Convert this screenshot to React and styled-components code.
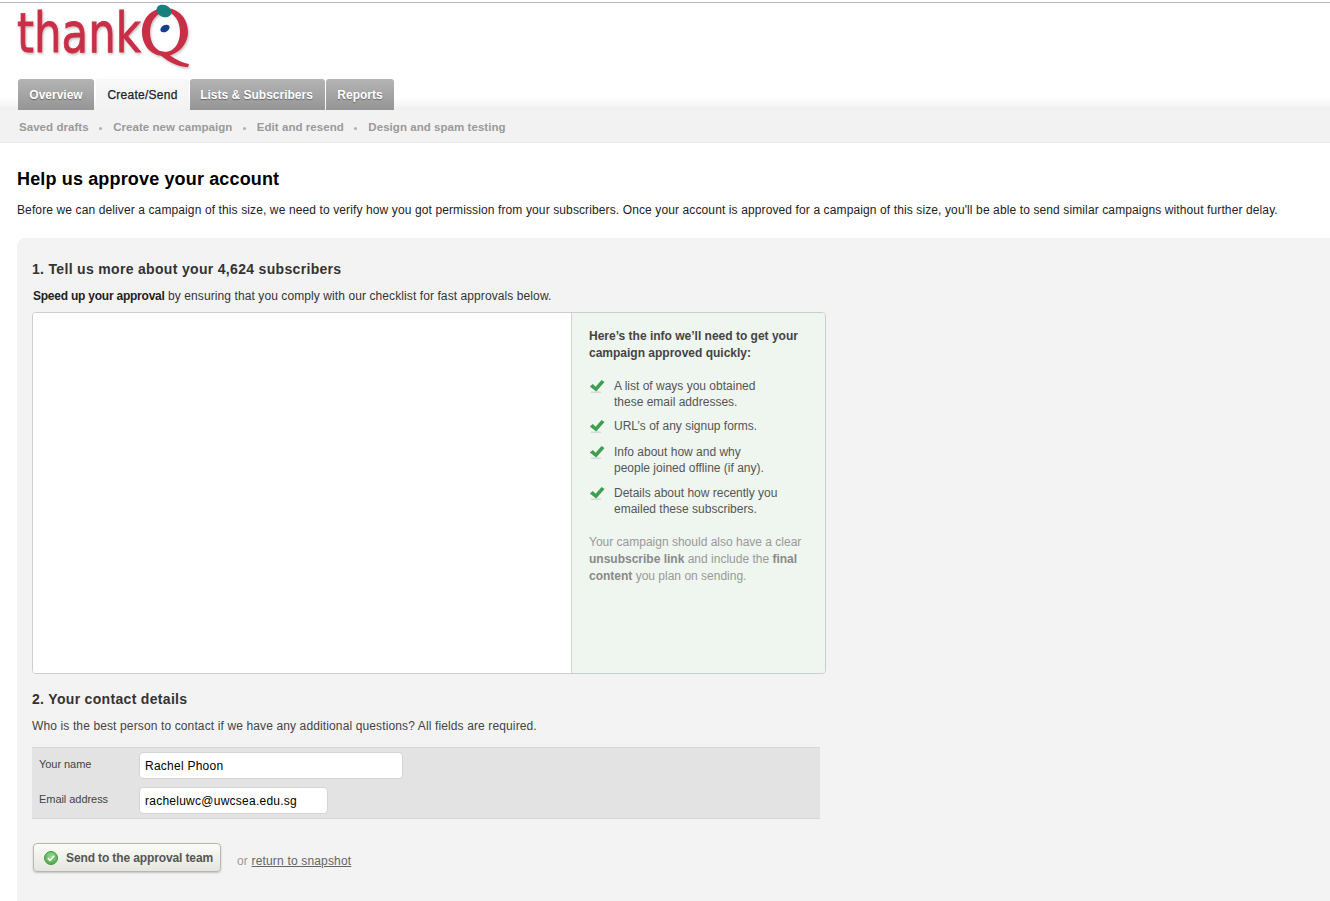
import React from "react"
import styled, { createGlobalStyle } from "styled-components"

const tabs = [
  { label: "Overview", width: 76 },
  { label: "Create/Send", width: 93, active: true },
  { label: "Lists & Subscribers", width: 135, nudge: 2 },
  { label: "Reports", width: 68 },
]

const subLinks = [
  "Saved drafts",
  "Create new campaign",
  "Edit and resend",
  "Design and spam testing",
]

const checklist = [
  ["A list of ways you obtained", "these email addresses."],
  ["URL’s of any signup forms."],
  ["Info about how and why", "people joined offline (if any)."],
  ["Details about how recently you", "emailed these subscribers."],
]

function Logo() {
  return (
    <LogoSvg viewBox="0 0 176 68" width="176" height="68">
      <defs>
        <filter id="logoShadow" x="-5%" y="-5%" width="110%" height="115%">
          <feDropShadow dx="1" dy="1.5" stdDeviation="1.2" floodColor="#000" floodOpacity="0.25" />
        </filter>
      </defs>
      <g filter="url(#logoShadow)" fill="#c92f47">
        <text x="0" y="48" fontFamily="'DejaVu Sans', sans-serif" fontSize="56" stroke="#c92f47" strokeWidth="0.9" textLength="124" lengthAdjust="spacingAndGlyphs">
          thank
        </text>
        <path
          fillRule="evenodd"
          d="M148 4c-14 0-23 11-23 24s9 24 22 24 24-11 24-24S162 4 148 4zm1 4c8 0 14 9 14 20s-6 20-15 20-15-9-15-20 7-20 16-20z"
        />
        <path d="M139 47l10 1c7 6 14 10 23 12l-1 3c-11 0-22-6-32-16z" />
      </g>
      <ellipse cx="147" cy="7" rx="7.8" ry="6" fill="#17807e" transform="rotate(25 147 7)" />
      <ellipse cx="148" cy="24.5" rx="5" ry="3.4" fill="#173f8c" transform="rotate(-30 148 24.5)" />
    </LogoSvg>
  )
}

function Check() {
  return (
    <CheckSvg viewBox="0 0 16 15" width="16" height="15">
      <path d="M2 13.2h10" stroke="#d3dcd4" strokeWidth="1.4" />
      <path d="M.8 7.6 3.8 5l2.8 2.7L12.6 1l2.9 2.1L7.2 12.6z" fill="#3f9f50" />
    </CheckSvg>
  )
}

function ButtonTick() {
  return (
    <TickSvg viewBox="0 0 14 14" width="14" height="14">
      <defs>
        <radialGradient id="tickBall" cx="50%" cy="35%" r="65%">
          <stop offset="0" stopColor="#9ad98c" />
          <stop offset="1" stopColor="#4aa94a" />
        </radialGradient>
      </defs>
      <circle cx="7" cy="7" r="6.5" fill="url(#tickBall)" stroke="#3e9a43" />
      <path d="M3.8 7.2 6 9.3l4.2-4.5" fill="none" stroke="#fff" strokeWidth="1.6" />
    </TickSvg>
  )
}

export default function App() {
  return (
    <Page>
      <GlobalStyle />
      <Masthead>
        <Logo />
      </Masthead>
      <TabBar>
        {tabs.map(tab => (
          <Tab key={tab.label} $active={tab.active} $width={tab.width} $nudge={tab.nudge}>
            {tab.label}
          </Tab>
        ))}
      </TabBar>
      <SubNav>
        {subLinks.map((link, index) => (
          <React.Fragment key={link}>
            {index > 0 && <SubDot />}
            <SubLink>{link}</SubLink>
          </React.Fragment>
        ))}
      </SubNav>

      <Content>
        <Title>Help us approve your account</Title>
        <Intro>
          Before we can deliver a campaign of this size, we need to verify how you got permission from your subscribers. Once your account is approved for a campaign of this size, you'll be able to send similar campaigns without further delay.
        </Intro>

        <Panel>
          <SectionTitle>1. Tell us more about your 4,624 subscribers</SectionTitle>
          <SectionText>
            <strong>Speed up your approval</strong> by ensuring that you comply with our checklist for fast approvals below.
          </SectionText>

          <FormBox>
            <BlankPane />
            <InfoPane>
              <InfoTitle>
                Here’s the info we’ll need to get your
                <br />
                campaign approved quickly:
              </InfoTitle>
              <CheckList>
                {checklist.map(lines => (
                  <CheckItem key={lines[0]}>
                    <Check />
                    <span>
                      {lines.map((line, i) => (
                        <React.Fragment key={line}>
                          {i > 0 && <br />}
                          {line}
                        </React.Fragment>
                      ))}
                    </span>
                  </CheckItem>
                ))}
              </CheckList>
              <InfoNote>
                Your campaign should also have a clear
                <br />
                <b>unsubscribe link</b> and include the <b>final</b>
                <br />
                <b>content</b> you plan on sending.
              </InfoNote>
            </InfoPane>
          </FormBox>

          <ContactTitle>2. Your contact details</ContactTitle>
          <ContactText>
            Who is the best person to contact if we have any additional questions? All fields are required.
          </ContactText>

          <Fields>
            <FieldRow>
              <FieldLabel>Your name</FieldLabel>
              <FieldInput $width={264} defaultValue="Rachel Phoon" />
            </FieldRow>
            <FieldRow>
              <FieldLabel>Email address</FieldLabel>
              <FieldInput $width={189} defaultValue="racheluwc@uwcsea.edu.sg" />
            </FieldRow>
          </Fields>

          <Actions>
            <SendButton>
              <ButtonTick />
              Send to the approval team
            </SendButton>
            <OrText>
              or <ReturnLink href="#">return to snapshot</ReturnLink>
            </OrText>
          </Actions>
        </Panel>
      </Content>
    </Page>
  )
}

const GlobalStyle = createGlobalStyle`
  html, body {
    margin: 0;
    padding: 0;
    background: #fff;
    overflow-x: hidden;
  }
  body {
    font-family: "Liberation Sans", Arial, sans-serif;
    font-size: 12px;
    color: #333;
  }
`

const Page = styled.div`
  width: 1330px;
  height: 901px;
  overflow: hidden;
  display: flex;
  flex-direction: column;
`

const Masthead = styled.header`
  height: 77px;
  box-sizing: border-box;
  margin-top: 2px;
  border-top: 1px solid #b9b9c6;
  padding: 1px 0 0 17px;
`

const LogoSvg = styled.svg`
  display: block;
  overflow: visible;
`

const TabBar = styled.nav`
  display: flex;
  gap: 1px;
  height: 31px;
  padding-left: 18px;
  background: linear-gradient(#fff 0, #fff 60%, #efefef 100%);
`

const Tab = styled.div`
  width: ${props => props.$width}px;
  margin-left: ${props => (props.$active ? "1px" : "0")};
  box-sizing: border-box;
  padding: 1px ${props => props.$nudge || 0}px 0 0;
  border-radius: 3px 3px 0 0;
  text-align: center;
  line-height: 31px;
  font-size: 12px;
  font-weight: ${props => (props.$active ? "normal" : "bold")};
  letter-spacing: ${props => (props.$active ? "0.25px" : "0")};
  color: ${props => (props.$active ? "#222" : "#fff")};
  -webkit-text-stroke: ${props => (props.$active ? "0.25px #222" : "0")};
  text-shadow: ${props => (props.$active ? "none" : "0 1px 1px #666")};
  background: ${props =>
    props.$active
      ? "linear-gradient(#f8f8f8, #f2f2f2)"
      : "linear-gradient(#b4b4b4, #959595)"};
`

const SubNav = styled.div`
  height: 33px;
  box-sizing: border-box;
  display: flex;
  align-items: center;
  padding: 2px 0 0 19px;
  background: #f2f2f2;
  border-bottom: 1px solid #e9e9e9;
`

const SubLink = styled.a`
  font-size: 11.5px;
  font-weight: bold;
  letter-spacing: 0.05px;
  color: #9a9a9a;
`

const SubDot = styled.i`
  width: 3px;
  height: 3px;
  margin: 2px 11px 0 10.5px;
  border-radius: 50%;
  background: #b0b0b0;
`

const Content = styled.main`
  flex: 1;
  display: flex;
  flex-direction: column;
  padding-left: 17px;
  min-height: 0;
`

const Title = styled.h1`
  margin: 25px 0 0;
  font-size: 18px;
  line-height: 22px;
  font-weight: bold;
  letter-spacing: 0.15px;
  color: #000;
`

const Intro = styled.p`
  margin: 12px 0 0;
  font-size: 12px;
  line-height: 16px;
  letter-spacing: 0.115px;
  color: #222;
  white-space: nowrap;
`

const Panel = styled.section`
  flex: 1;
  margin-top: 20px;
  padding: 22px 0 0 15px;
  background: #f3f3f3;
  border-top-left-radius: 8px;
`

const SectionTitle = styled.h2`
  margin: 0;
  font-size: 14px;
  line-height: 18px;
  font-weight: bold;
  letter-spacing: 0.32px;
  color: #333;
`

const SectionText = styled.p`
  margin: 10px 0 0 1px;
  font-size: 12px;
  line-height: 16px;
  letter-spacing: 0.09px;
  color: #333;
  strong {
    letter-spacing: -0.23px;
    color: #222;
  }
`

const FormBox = styled.div`
  display: flex;
  width: 794px;
  height: 362px;
  box-sizing: border-box;
  margin-top: 8px;
  border: 1px solid #c9cfca;
  border-radius: 4px;
  overflow: hidden;
`

const BlankPane = styled.div`
  width: 538px;
  background: #fff;
`

const InfoPane = styled.aside`
  flex: 1;
  box-sizing: border-box;
  padding: 15px 0 0 17px;
  background: #eff5ef;
  border-left: 1px solid #cfd6d0;
`

const InfoTitle = styled.h3`
  margin: 0;
  font-size: 12px;
  line-height: 17px;
  font-weight: bold;
  color: #444;
`

const CheckList = styled.ul`
  list-style: none;
  margin: 16px 0 0;
  padding: 0;
  display: flex;
  flex-direction: column;
  gap: 9px;
`

const CheckItem = styled.li`
  display: flex;
  gap: 9px;
  font-size: 12px;
  line-height: 16px;
  color: #555;
  &:nth-child(2) {
    margin: -1px 0 1px;
  }
`

const CheckSvg = styled.svg`
  flex: none;
  margin-top: 1px;
`

const InfoNote = styled.p`
  margin: 17px 0 0;
  font-size: 12px;
  line-height: 17px;
  color: #999;
  b {
    color: #8a8a8a;
  }
`

const ContactTitle = styled(SectionTitle)`
  margin-top: 16px;
`

const ContactText = styled.p`
  margin: 10px 0 0;
  font-size: 12px;
  line-height: 16px;
  letter-spacing: 0.125px;
  color: #444;
`

const Fields = styled.div`
  width: 788px;
  height: 72px;
  box-sizing: border-box;
  margin-top: 13px;
  padding-top: 4px;
  display: flex;
  flex-direction: column;
  gap: 8px;
  background: #e3e3e3;
  border-top: 1px solid #d6d6d6;
  border-bottom: 1px solid #d6d6d6;
`

const FieldRow = styled.label`
  display: flex;
  align-items: flex-start;
`

const FieldLabel = styled.span`
  width: 107px;
  box-sizing: border-box;
  padding: 5px 0 0 7px;
  font-size: 11px;
  line-height: 14px;
  letter-spacing: -0.05px;
  color: #444;
`

const FieldInput = styled.input`
  width: ${props => props.$width}px;
  height: 27px;
  box-sizing: border-box;
  padding: 0 5px;
  border: 1px solid #d4d4d4;
  border-radius: 4px;
  background: #fff;
  font-family: "Liberation Sans", Arial, sans-serif;
  font-size: 12px;
  letter-spacing: 0.25px;
  color: #000;
  outline: none;
`

const Actions = styled.div`
  display: flex;
  align-items: flex-start;
  gap: 16px;
  margin: 24px 0 0 1px;
`

const SendButton = styled.button`
  display: flex;
  align-items: center;
  gap: 8px;
  width: 188px;
  height: 29px;
  box-sizing: border-box;
  padding: 0 0 0 10px;
  border: 1px solid #b4b8b0;
  border-radius: 4px;
  background: linear-gradient(#fbfbf8, #e6e6de);
  box-shadow: 0 1px 2px rgba(0, 0, 0, 0.2);
  font-family: "Liberation Sans", Arial, sans-serif;
  font-size: 12px;
  font-weight: bold;
  letter-spacing: -0.12px;
  color: #555;
`

const TickSvg = styled.svg`
  flex: none;
`

const OrText = styled.span`
  margin-top: 10px;
  font-size: 12px;
  line-height: 16px;
  letter-spacing: 0.17px;
  color: #999;
`

const ReturnLink = styled.a`
  color: #666;
  text-decoration: underline;
`
